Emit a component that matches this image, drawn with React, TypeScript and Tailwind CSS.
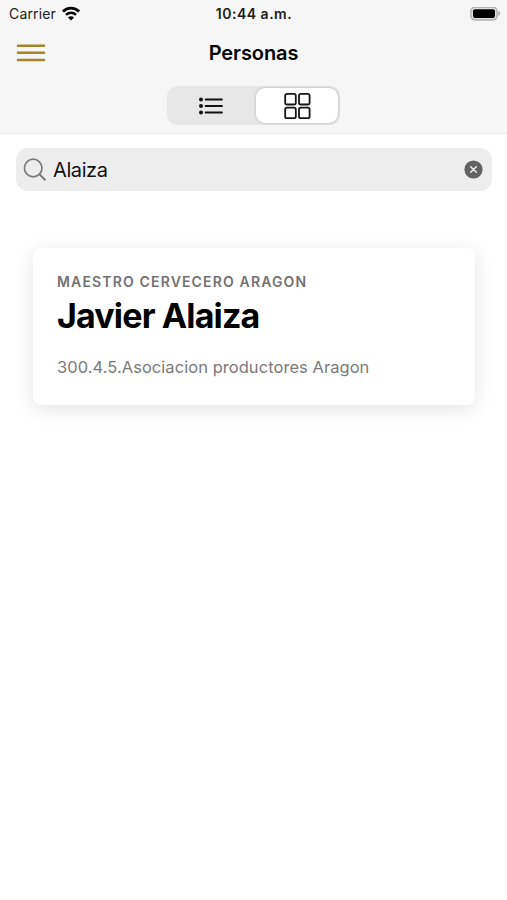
function WifiIcon() {
  return (
    <svg className="-mt-0.5 h-[15px] w-5" viewBox="0 0 20 15" fill="none" stroke="#050505">
      <path d="M1.9 5.6C6.4 1 13.6 1 18.1 5.6" strokeWidth="2.8" />
      <path d="M5 8.8c2.8-2.8 7.2-2.8 10 0" strokeWidth="2.4" />
      <path d="M10 14.4 7 11.5c1.7-1.6 4.3-1.6 6 0Z" fill="#050505" stroke="none" />
    </svg>
  );
}

function BatteryIcon() {
  return (
    <svg className="h-[14px] w-[31px]" viewBox="0 0 31 14">
      <rect x="0.9" y="0.3" width="26.2" height="12.6" rx="3.8" fill="#dedede" stroke="#b2b2b2" strokeWidth="1.5" />
      <rect x="3" y="2.3" width="22" height="8.6" rx="1.8" fill="#000" />
      <path d="M28.4 4.1c2.4.7 2.4 4.1 0 4.8Z" fill="#ababab" />
    </svg>
  );
}

function StatusBar() {
  return (
    <div className="grid h-7 grid-cols-3 items-center pl-[9px] pr-[6px] text-[14px] leading-none text-[#1c1c1c]">
      <div className="flex items-center gap-[5px]">
        <span className="w-[47px] whitespace-nowrap tracking-[0.15px]">Carrier</span>
        <WifiIcon />
      </div>
      <div className="pr-[2px] text-center font-semibold tracking-[0.5px]">10:44 a.m.</div>
      <div className="flex justify-end">
        <BatteryIcon />
      </div>
    </div>
  );
}

function ViewSwitch() {
  return (
    <div className="mx-auto flex h-[39px] w-[173px] rounded-[10px] bg-[#e7e7e7] p-[2px]">
      <button className="flex flex-1 items-center justify-center pr-[3px]" aria-label="Lista">
        <svg className="h-[18px] w-[26px]" viewBox="0 0 26 18" fill="none" stroke="#111" strokeWidth="1.8" strokeLinecap="round">
          <path d="M7.6 2.5h16.4M7.6 9h16.4M7.6 15.5h16.4" />
          <g fill="#111" stroke="none">
            <circle cx="3" cy="2.5" r="2" />
            <circle cx="3" cy="9" r="2" />
            <circle cx="3" cy="15.5" r="2" />
          </g>
        </svg>
      </button>
      <button
        className="flex w-[82px] items-center justify-center rounded-[9px] bg-white shadow-[0_0_3px_rgba(0,0,0,0.25)]"
        aria-label="Tarjetas"
      >
        <svg className="h-[28px] w-[28px]" viewBox="0 0 28 28" fill="none" stroke="#151515" strokeWidth="1.8">
          <rect x="2.2" y="1.9" width="10.6" height="10.6" rx="1.8" />
          <rect x="16" y="1.9" width="10.6" height="10.6" rx="1.8" />
          <rect x="2.2" y="15.6" width="10.6" height="10.6" rx="1.8" />
          <rect x="16" y="15.6" width="10.6" height="10.6" rx="1.8" />
        </svg>
      </button>
    </div>
  );
}

function Header() {
  return (
    <header className="h-[134px] border-b border-[#ebebeb] bg-[#f6f6f6]">
      <StatusBar />
      <div className="grid h-[58px] grid-cols-[60px_1fr_60px] items-start">
        <button className="pl-4 pt-4" aria-label="Menú">
          <svg className="h-[18px] w-[30px]" viewBox="0 0 30 18" stroke="#a38427" strokeWidth="2.6" strokeLinecap="round">
            <path d="M2 1.7h26M2 8.8h26M2 16h26" />
          </svg>
        </button>
        <h1 className="pt-[13px] text-center text-[20px] font-semibold leading-6 tracking-[-0.1px] text-black">Personas</h1>
      </div>
      <ViewSwitch />
    </header>
  );
}

function SearchField() {
  return (
    <div className="ml-4 mr-[15px] mt-[14px] flex h-[43px] items-center rounded-[12px] bg-[#ededed] pl-[7px] pr-[9px]">
      <svg className="h-6 w-6" viewBox="0 0 24 24" fill="none" stroke="#7b7b7b" strokeWidth="1.7">
        <circle cx="10.2" cy="10" r="8.8" />
        <path d="m16.4 16.2 6 6" strokeWidth="2" />
      </svg>
      <span className="ml-1.5 flex-1 text-[20px] leading-6 tracking-[-0.4px] text-[#111]">Alaiza</span>
      <svg className="h-[19px] w-[19px]" viewBox="0 0 19 19">
        <circle cx="9.5" cy="9.5" r="9.1" fill="#626262" />
        <path d="m6.7 6.7 5.6 5.6m0-5.6-5.6 5.6" stroke="#ededed" strokeWidth="1.5" strokeLinecap="round" />
      </svg>
    </div>
  );
}

function PersonCard() {
  return (
    <article className="ml-[33px] mr-8 mt-[57px] h-[157px] rounded-[8px] bg-white px-6 pt-[25px] shadow-[0_4px_20px_rgba(0,0,0,0.11)]">
      <p className="whitespace-nowrap text-[14px] font-semibold leading-[18px] tracking-[1.15px] text-[#727272]">
        MAESTRO CERVECERO ARAGON
      </p>
      <h2 className="mt-[5px] whitespace-nowrap text-[34px] font-bold leading-10 tracking-[-0.85px] text-black">
        Javier Alaiza
      </h2>
      <p className="mt-5 whitespace-nowrap text-[16.5px] leading-[22px] tracking-[0.05px] text-[#7a7a7a]">
        300.4.5.Asociacion productores Aragon
      </p>
    </article>
  );
}

export default function App() {
  return (
    <main className="h-[900px] w-[507px] overflow-hidden bg-white font-[Inter,Roboto,sans-serif]">
      <Header />
      <SearchField />
      <PersonCard />
    </main>
  );
}
